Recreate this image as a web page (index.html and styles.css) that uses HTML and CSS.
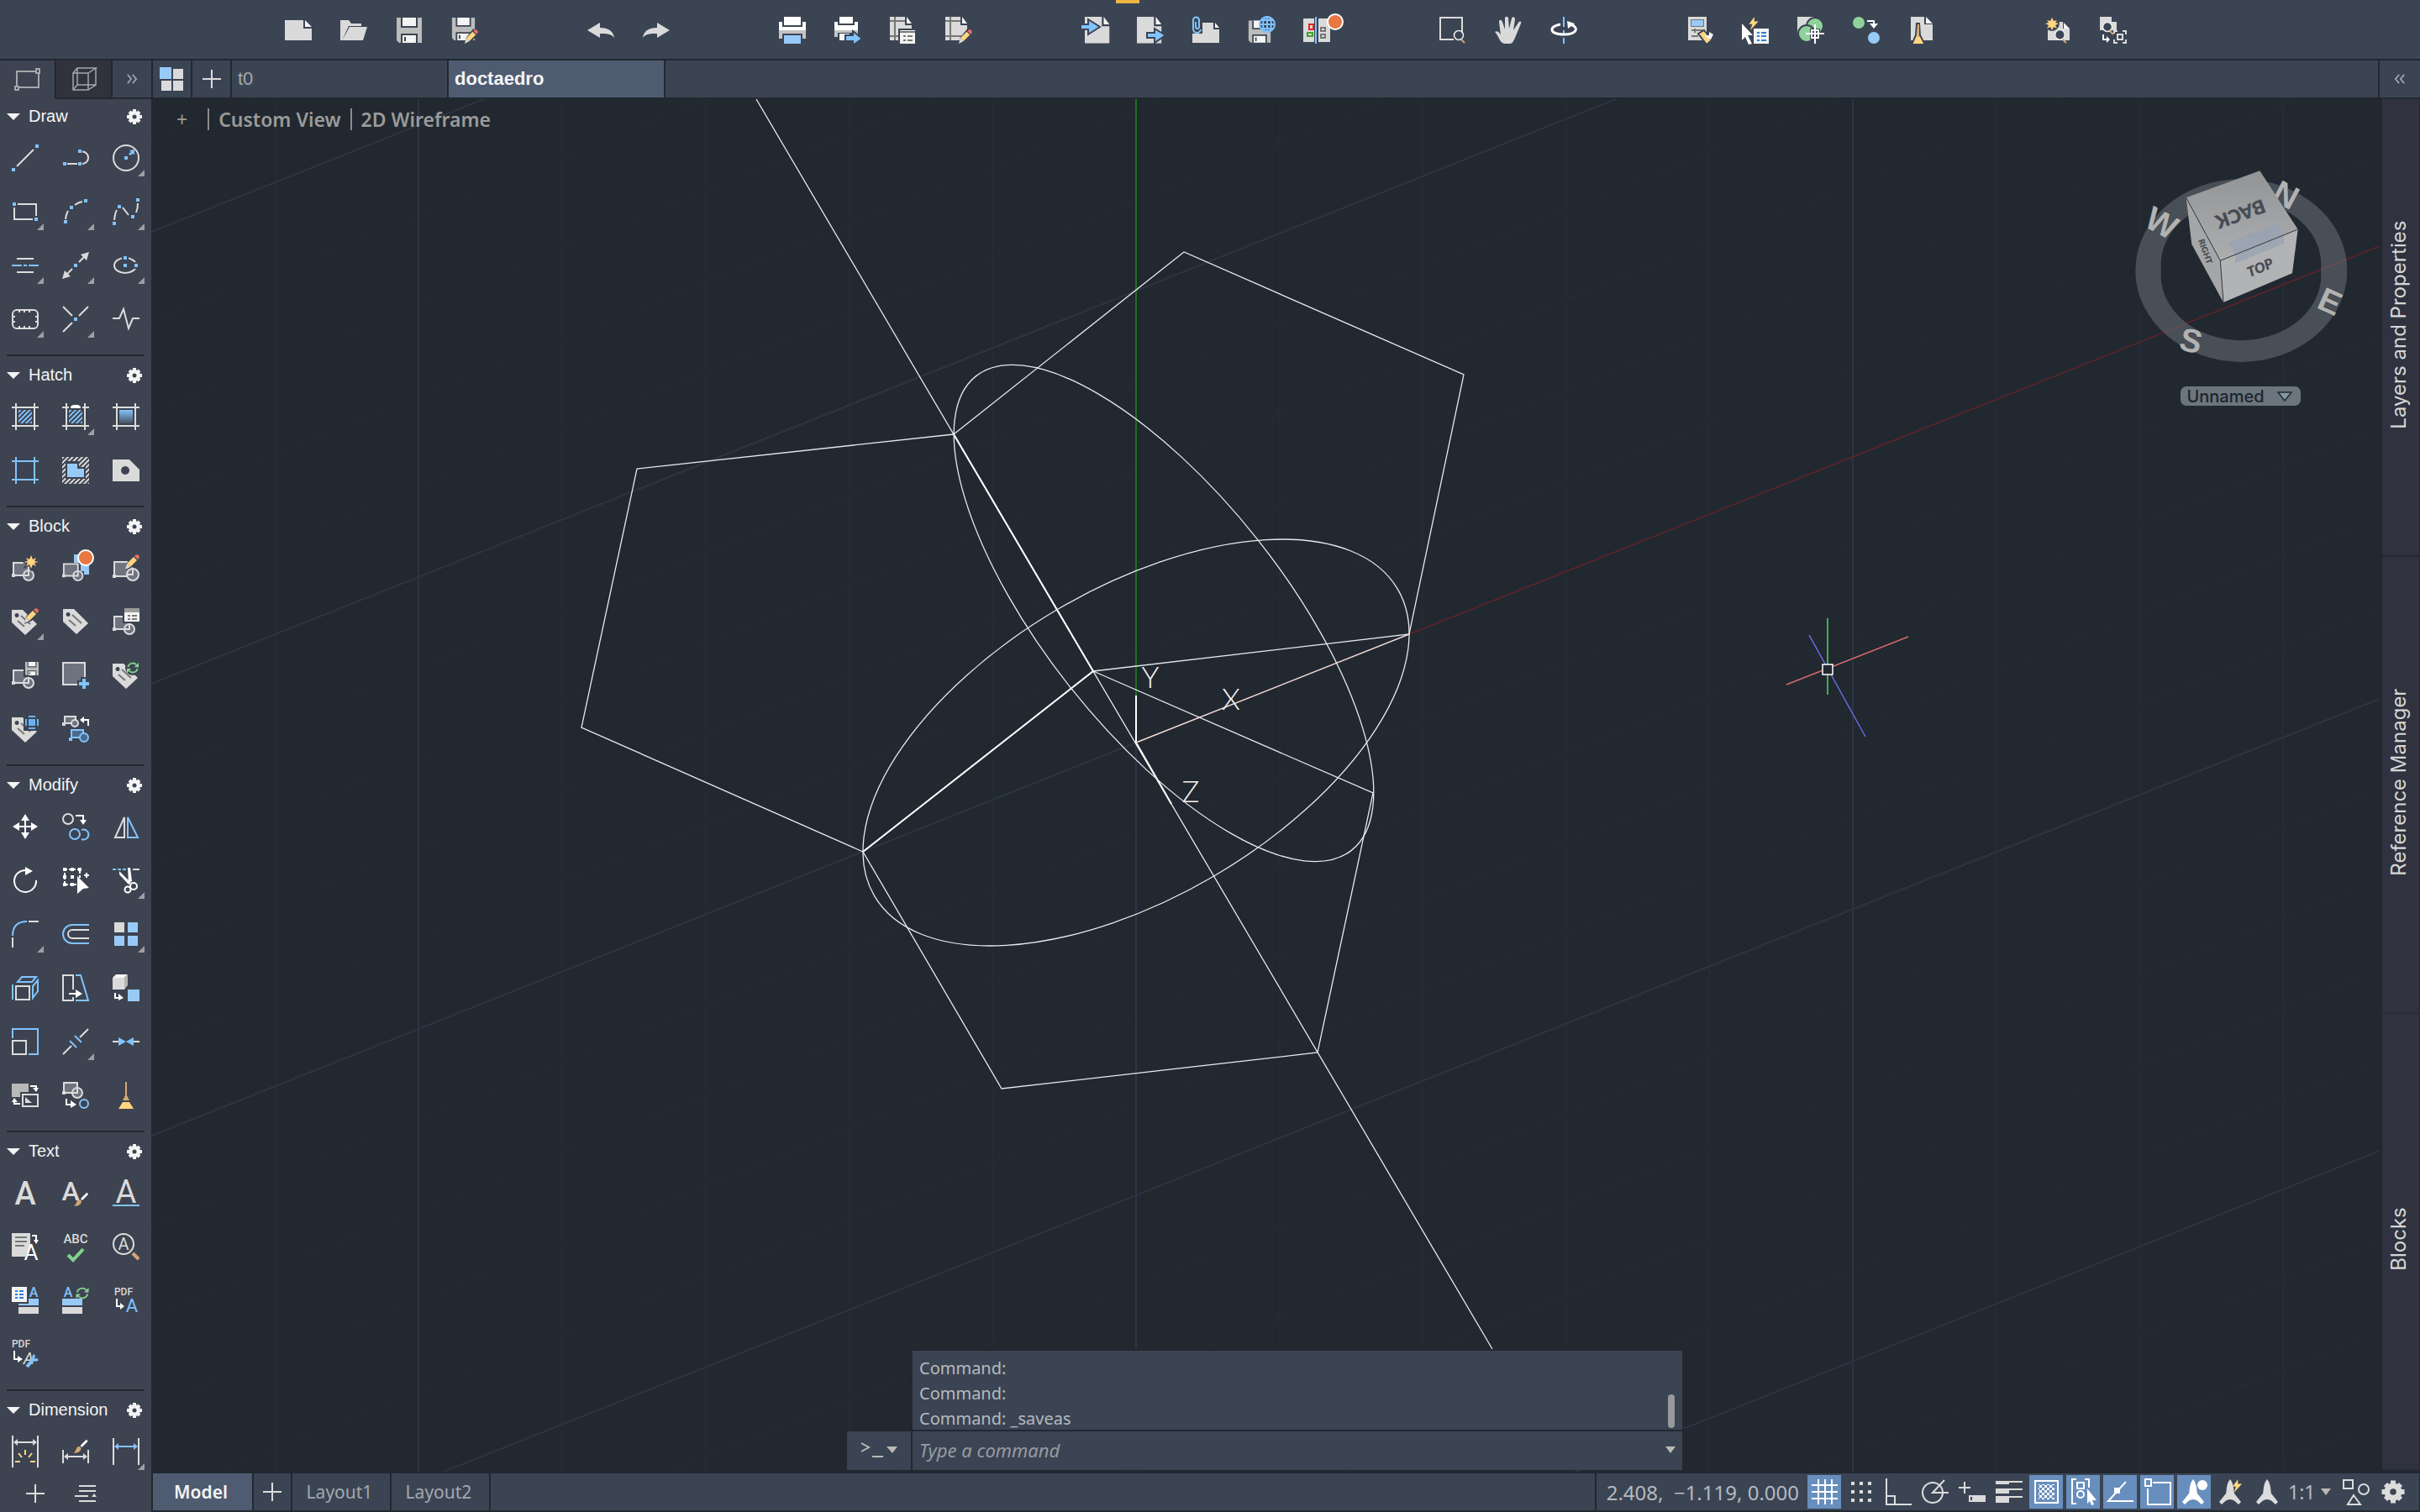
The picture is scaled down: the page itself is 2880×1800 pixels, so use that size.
FILE: index.html
```html
<!DOCTYPE html>
<html lang="en">
<head>
  <meta charset="UTF-8">
  <title>doctaedro</title>
  <link rel="stylesheet" href="styles.css">
</head>
<body>
  <!-- shared icon parts -->
  <svg class="defs" aria-hidden="true">
    <defs>
      <pattern id="hatch-blue" width="4" height="4" patternUnits="userSpaceOnUse" patternTransform="rotate(45)"><rect class="fb" width="2" height="4"/></pattern>
      <pattern id="hatch-grey" width="4" height="4" patternUnits="userSpaceOnUse" patternTransform="rotate(45)"><rect class="fg" width="2" height="4"/></pattern>
      <pattern id="checker" width="6" height="6" patternUnits="userSpaceOnUse"><path class="fw" d="M0 0h3v3H0zM3 3h3v3H3z"/></pattern>
      <linearGradient id="fade" x1="0" y1="0" x2="0" y2="1"><stop offset="0" stop-color="#82c3ff"/><stop offset="1" stop-color="#4a5260"/></linearGradient>
      <linearGradient id="face-back" x1="0" y1="0" x2="0" y2="1"><stop offset="0" stop-color="#939496"/><stop offset="1" stop-color="#adaeb0"/></linearGradient>
    </defs>
    <symbol id="gear" viewBox="0 0 20 20">
      <path fill="none" stroke="currentColor" stroke-width="4" d="M10 1v18M1 10h18M4 4l12 12M16 4L4 16"/>
      <circle cx="10" cy="10" r="4.5" fill="none" stroke="currentColor" stroke-width="5"/>
      <circle class="fk" cx="10" cy="10" r="2.5"/>
    </symbol>
    <symbol id="pencil" viewBox="0 0 17 17">
      <path class="fk" d="M0 19l2-9L11-1l7 7-9 9z"/>
      <path class="fo" d="M10 3l4 4-8 8-4-4z"/>
      <path class="fr" d="M11 2l1.500-1.500a3 3 0 0 1 4 4L15 6z"/>
      <path class="fg" d="M2 11l4 4-6 3z"/>
    </symbol>
    <symbol id="blk" viewBox="0 0 32 32">
      <path class="block" d="M2 25V10h18v15z"/>
      <circle class="block" cx="20" cy="25" r="6"/>
      <path class="g" d="M20 19v6h-6"/>
      <path class="fg" d="M0 23h4v4H0z"/>
    </symbol>
    <symbol id="tag" viewBox="0 0 32 32">
      <path class="fg" fill-rule="evenodd" d="M1 1h13l17 17-14 13L1 16zM7 5a2.500 2.500 0 1 0 .1 0z"/>
      <path class="d" d="M12 8l11 10M8 14l8 7"/>
    </symbol>
    <symbol id="refresh" viewBox="0 0 16 16">
      <path class="gn" d="M1.500 7A6.500 6 0 0 1 13 4M14.500 9A6.500 6 0 0 1 3 12"/>
      <path class="fgn" d="M16 1v6h-6zM0 15V9h6z"/>
    </symbol>
    <symbol id="brush" viewBox="0 0 20 20">
      <path d="M10 10l8-8" stroke="#fff" stroke-width="3"/>
      <path class="ft" d="M0 18c4-1 3-9 8-8l2 2c0 5-6 8-10 6z"/>
    </symbol>
    <symbol id="glass" viewBox="0 0 16 16">
      <circle cx="7" cy="6" r="5.500" fill="#3b4453" stroke="#eee" stroke-width="1.500"/>
      <path class="t" d="M10 11l4 4"/>
    </symbol>
    <symbol id="floppy" viewBox="0 0 32 32">
      <path fill="#bcbcbc" d="M1 1h30v30H4l-3-3z"/>
      <path class="fk" d="M6 1h20v12H6zM6 20h20v11H6z"/>
      <path class="fl" d="M8 1h16v10H8zM8 22h16v9H8z"/>
      <path class="fk" d="M10 24h2v5h-2z"/>
    </symbol>
    <symbol id="page" viewBox="0 0 32 32"><path class="fg" d="M0 0h18v10h8v18H0z"/><path class="fl" d="M20 0l6 8h-6z"/></symbol>
    <symbol id="annot" viewBox="0 0 40 40"><path d="M19 5c5 6 4 14 5 17l8 10-3 3c-4-4-6-6-10-6s-6 2-10 6l-3-3 8-10c1-3 0-11 5-17z" fill="currentColor"/></symbol>
    <symbol id="bolt" viewBox="0 0 16 20"><path class="fo" d="M9 0L1 11h5l-3 9L15 7H9z"/></symbol>
  </svg>

  <div class="app">
    <header class="toolbar">
      <span class="notch"></span>
      <div class="group">
        <button class="tool" aria-label="New"><svg viewBox="0 0 32 32"><path class="fg" d="M0 4h22v10h10v14H0z"/><path class="fl" d="M24 4l8 8h-8z"/></svg></button>
        <button class="tool" aria-label="Open"><svg viewBox="0 0 32 32"><path class="fg" d="M0 28V4h10l3 4h12v3H10L2 28zM11 12h21l-5 16H2z"/></svg></button>
        <button class="tool" aria-label="Save"><svg viewBox="0 0 32 32"><use href="#floppy"/></svg></button>
        <button class="tool" aria-label="Save as"><svg viewBox="0 0 32 32"><use href="#floppy" width="29" height="29"/><use href="#pencil" x="16" y="15" width="16" height="16"/></svg></button>
      </div>
      <div class="group">
        <button class="tool" aria-label="Undo"><svg viewBox="0 0 32 32"><path class="fg" d="M0 16L15 7v6c10 0 16 4 17 12-4-5-9-5-17-5v5z"/></svg></button>
        <button class="tool" aria-label="Redo"><svg viewBox="0 0 32 32"><path class="fg" d="M32 16L17 7v6C7 13 1 17 0 25c4-5 9-5 17-5v5z"/></svg></button>
      </div>
      <div class="group">
        <button class="tool" aria-label="Plot"><svg viewBox="0 0 32 32"><path class="fw" d="M0 6h4v6h24V6h4v10H0zM6 0h20v10H6z"/><path fill="#c4c4c4" d="M0 16h32v10H0z"/><path class="fk" d="M4 20h24v12H4z"/><path class="fbl" d="M6 22h20v10H6z"/></svg></button>
        <button class="tool" aria-label="Batch plot"><svg viewBox="0 0 32 32"><path class="fw" d="M0 6h4v4h20V6h4v10H0zM6 0h16v8H6z"/><path fill="#c4c4c4" d="M0 16h28v8H0z"/><path class="fk" d="M4 19h20v9H4z"/><path class="fl" d="M6 20h12v8H6z"/><path class="fb edge" d="M13 22h9v-5l11 9-11 8v-5h-9z"/></svg></button>
        <button class="tool" aria-label="Page setup"><svg viewBox="0 0 32 32"><use href="#page" width="32" height="32"/><path class="d" d="M6 0v28M0 5h18M0 23h16"/><path class="fk" d="M10 14h22v18H10z"/><path class="fl" d="M12 16h18v16H12z"/><path class="d" d="M12 18h18M16 23h3M16 28h3M21 23h6M21 28h6"/></svg></button>
        <button class="tool" aria-label="Plot styles"><svg viewBox="0 0 32 32"><use href="#page" width="32" height="32"/><path class="d" d="M6 0v28M0 5h18M0 23h20"/><use href="#pencil" x="16" y="15" width="16" height="16"/></svg></button>
      </div>
      <div class="group">
        <button class="tool" aria-label="Import"><svg viewBox="0 0 32 32"><use href="#page" x="4" width="36" height="36"/><path class="fb edge" d="M-1 9h9V3l14 9L8 21v-6h-9z"/></svg></button>
        <button class="tool" aria-label="Export"><svg viewBox="0 0 32 32"><use href="#page" width="36" height="36"/><path class="fb edge" d="M12 19h9v-5l13 8-13 9v-6h-9z"/></svg></button>
        <button class="tool" aria-label="Attach"><svg viewBox="0 0 32 32"><path class="fg" d="M0 18l12-11h13v8h7v16H0z"/><path class="fl" d="M27 7l5 6h-5z"/><path class="fk" d="M0 0h12v20H0z"/><path class="b" d="M4 6v6a2 2 0 0 0 4 0V4a3 3 0 0 0-7 0v10a4 4 0 0 0 9 1"/></svg></button>
        <button class="tool" aria-label="Save to web"><svg viewBox="0 0 32 32"><use href="#floppy" y="3" width="28" height="29"/><circle cx="23" cy="9" r="9" fill="#3b4453" stroke="#82c3ff" stroke-width="2"/><path class="b" d="M14 9h18M16 4h14M16 14h14M23 0v18"/><ellipse class="b" cx="23" cy="9" rx="5" ry="9"/></svg></button>
        <button class="tool" aria-label="Compare"><svg viewBox="0 0 32 32"><path class="fg" d="M0 2h13v28H0zM18 2h14v28H18z"/><path class="b" d="M15 0v32"/><path fill="none" stroke="#f02020" stroke-width="2" d="M7 9h5v6H7z"/><path fill="none" stroke="#3da52e" stroke-width="2" d="M5 19h6v4H5z"/><path class="d" d="M21 13h5v4h-5zM21 21h5v4h-5z"/><circle cx="38" cy="6" r="9" class="badge"/></svg></button>
      </div>
      <div class="group">
        <button class="tool" aria-label="Zoom window"><svg viewBox="0 0 32 32"><path class="g" d="M27 18V1H1v26h16"/><use href="#glass" x="16" y="16" width="16" height="16"/></svg></button>
        <button class="tool" aria-label="Pan"><svg viewBox="0 0 32 32"><path class="fg" d="M0 18c3-2 6 1 7 4L5 6c0-3 3-3 4 0l3 9V2c0-3 4-3 4 0l1 12 3-12c1-3 4-2 4 1l-2 13 6-9c2-3 4-1 3 1l-7 17c-2 4-3 7-6 7h-6c-6 0-7-9-12-14z"/></svg></button>
        <button class="tool" aria-label="Orbit"><svg viewBox="0 0 32 32"><path class="b" d="M16 0v12M16 16v4M16 25v7"/><path d="M12 9C-2 11-2 21 16 21c17 0 18-9 8-12" fill="none" stroke="#fff" stroke-width="3"/><path class="fw" d="M20 5l9 3-8 6z"/></svg></button>
      </div>
      <div class="group">
        <button class="tool" aria-label="Calculator"><svg viewBox="0 0 32 32"><path class="fg" d="M2 0h22v28H2z"/><path fill="#6f7380" d="M5 3h16v9H5z"/><path class="fbl" d="M6 4h14v7H6z"/><path class="d" d="M6 16h14M10 14v5M6 23h8"/><path class="edge fo" d="M14 20l7-4 9 12-6 5z"/><path class="fl" d="M21 18l3 4h3v-4l5 3-3 6-4-1z"/></svg></button>
        <button class="tool" aria-label="Quick select"><svg viewBox="0 0 32 32"><use href="#bolt" x="6" y="0" width="16" height="16"/><path class="fl" d="M14 14h18v18H14z"/><path d="M18 19h3M18 23h3M18 28h3M23 19h6M23 23h6M23 28h6" stroke="#2f7fd6" stroke-width="2"/><path class="fw" d="M0 8l13 14H7l5 10-4 1-4-9-4 4z"/></svg></button>
        <button class="tool" aria-label="Geolocation"><svg viewBox="0 0 32 32"><path class="fg" d="M0 0h20v20H0z"/><circle class="fgn edge" cx="21" cy="11" r="10"/><circle class="fgn edge" cx="11" cy="20" r="10"/><path class="fk" d="M15 14h12v13H15z"/><path d="M10 20h22M21 9v23" stroke="#fff" stroke-width="2"/><path fill="none" stroke="#fff" stroke-width="2" d="M17 16h8v9h-8z"/></svg></button>
        <button class="tool" aria-label="Match properties"><svg viewBox="0 0 32 32"><circle class="fgn" cx="7" cy="7" r="7"/><circle class="fbl" cx="25" cy="25" r="7"/><path class="w" d="M17 5h8v5"/><path class="fw" d="M20 8h10l-5 6z"/></svg></button>
        <button class="tool" aria-label="Purge"><svg viewBox="0 0 32 32"><path class="fg" d="M3 0h16v9h10v19H3z"/><path class="fl" d="M21 0l8 8h-8z"/><path class="edge fo" d="M10 8h3l1 14 6 11H4l5-11z"/><path class="t" d="M12 9v15"/></svg></button>
      </div>
      <div class="group">
        <button class="tool" aria-label="New view"><svg viewBox="0 0 32 32"><path class="fg" d="M4 14h8V6h10v8h8v14H4z"/><path class="fl" d="M23 7l7 7h-7z"/><circle class="fk" cx="9" cy="8" r="9"/><path class="fo" d="M9 1l2 4 4-1-2 3 4 1-4 2 2 4-4-2-2 4-2-4-4 2 2-4-4-2 4-1-2-3 4 1z"/><use href="#glass" x="11" y="15" width="17" height="17"/></svg></button>
        <button class="tool" aria-label="View manager"><svg viewBox="0 0 32 32"><path class="fg" d="M0 0h14v6h6v10H0z"/><use href="#glass" x="2" y="6" width="16" height="16"/><path class="w" d="M4 21v6h5"/><path class="fw" d="M8 23l4 4-4 4z"/><path class="g" d="M17 20v-3h4M27 17h4v4M31 27v4h-4M21 31h-4v-4"/><path class="g" d="M21 21h6v6h-6z"/></svg></button>
      </div>
    </header>

    <nav class="tabs">
      <button class="set set-on" aria-label="Drafting tools"><svg viewBox="0 0 32 32"><path d="M3 25V6h22M29 7v18H6" fill="none" stroke="#a5a7ab" stroke-width="2"/><path d="M1 24h4v4H1zM26 3h4v5h-4z" fill="none" stroke="#a5a7ab" stroke-width="2"/></svg></button>
      <button class="set" aria-label="Modeling tools"><svg viewBox="0 0 32 32"><path d="M3 9h18v20H3zM3 9l5-6h22l-9 6M30 3v20l-9 6M8 3v20l-5 6M8 23h22" fill="none" stroke="#a5a7ab" stroke-width="1.500"/></svg></button>
      <button class="more" aria-label="More tool sets"><svg viewBox="0 0 16 14"><path d="M2 1l5 6-5 6M9 1l5 6-5 6"/></svg></button>
      <button class="square" aria-label="Drawing tabs"><svg viewBox="0 0 30 30"><path class="fg" d="M16 3h12v12H16zM2 17h12v12H2zM16 17h12v12H16z"/><path class="fbl" d="M0 1h14v14H0z"/></svg></button>
      <button class="square" aria-label="New tab"><svg viewBox="0 0 30 30"><path class="g" d="M15 4v22M4 15h22"/></svg></button>
      <button class="tab">t0</button>
      <button class="tab active">doctaedro</button>
      <span class="fill"></span>
      <button class="more" aria-label="Collapse panel"><svg viewBox="0 0 16 14"><path d="M7 1L2 7l5 6M14 1L9 7l5 6"/></svg></button>
    </nav>

    <div class="work">
      <aside class="sidebar">
        <div class="sections">
          <section>
            <h2><span class="arrow"></span>Draw<button aria-label="Draw settings"><svg><use href="#gear"/></svg></button></h2>
            <div class="tools">
              <button aria-label="Line"><svg viewBox="0 0 32 32"><path class="g" d="M6 26L26 6"/><path class="fb" d="M28 0h4v4h-4zM0 28h4v4H0z"/></svg></button>
              <button aria-label="Polyline"><svg viewBox="0 0 32 32"><path class="g" d="M6 23h12M24 8.500a7 7.200 0 0 1 0 14.500"/><path class="fb" d="M1 21h4v4H1zM19 21h4v4h-4zM19 6h4v4h-4z"/></svg></button>
              <button class="fly" aria-label="Circle"><svg viewBox="0 0 32 32"><circle class="g" cx="16" cy="16" r="15"/><path class="fb" d="M14 14h4v4h-4zM26 6v6l-2-1-3 2-2-2 3-2-2-2z"/></svg></button>
              <button class="fly" aria-label="Rectangle"><svg viewBox="0 0 32 32"><path class="g" d="M7 7h22v14M25 25H3V11"/><path class="fb" d="M1 5h4v4H1zM27 23h4v4h-4z"/></svg></button>
              <button class="fly" aria-label="Arc"><svg viewBox="0 0 32 32"><path class="g" d="M4 25q1-7 3-10M15 8q4-3 9-4"/><path class="fb" d="M26 1h4v4h-4zM9 9h4v4H9zM2 26h4v4H2z"/></svg></button>
              <button class="fly" aria-label="Spline"><svg viewBox="0 0 32 32"><path class="g" d="M2 26q1-9 3-12M12 11l7 9M28 17q2-5 2-11"/><path class="fb" d="M28 0h4v4h-4zM6 8h4v4H6zM22 20h4v4h-4zM0 28h4v4H0z"/></svg></button>
              <button class="fly" aria-label="Construction line"><svg viewBox="0 0 32 32"><path class="g" d="M6 8h20M6 24h20"/><path class="b" d="M0 16h12M14 16h4M20 16h12"/></svg></button>
              <button class="fly" aria-label="Ray"><svg viewBox="0 0 32 32"><path class="g" d="M20 12l6-6M12 20l-6 6"/><path class="fg" d="M32 0L22 3l7 7zM0 32l3-10 7 7z"/><path class="fb" d="M14 14h4v4h-4z"/></svg></button>
              <button class="fly" aria-label="Ellipse"><svg viewBox="0 0 32 32"><ellipse class="g" cx="15" cy="16" rx="13" ry="9"/><path class="fk" d="M11 4h8v6h-8zM25 12h6v8h-6z"/><path class="fb" d="M13 5h4v4h-4zM13 14h4v4h-4zM26 14h4v4h-4z"/></svg></button>
              <button class="fly" aria-label="Revision cloud"><svg viewBox="0 0 32 32"><rect class="g" x="1" y="5" width="30" height="22" rx="5"/><path class="g scallop" d="M8 7h17M8 25h17M3 12v9M29 12v9"/></svg></button>
              <button class="fly" aria-label="Point"><svg viewBox="0 0 32 32"><path class="g" d="M1 1l11 11M20 12L31 1M12 20L1 31"/><path class="fb" d="M14 14h4v4h-4z"/></svg></button>
              <button aria-label="Break line"><svg viewBox="0 0 32 32"><path class="g" d="M0 15h8l5-11 6 23 5-12h8"/></svg></button>
            </div>
          </section>
          <section>
            <h2><span class="arrow"></span>Hatch<button aria-label="Hatch settings"><svg><use href="#gear"/></svg></button></h2>
            <div class="tools">
              <button aria-label="Hatch"><svg viewBox="0 0 32 32"><path class="g" d="M5 0v32M27 0v32M0 5h32M0 27h32"/><path fill="url(#hatch-blue)" d="M8 8h16v16H8z"/></svg></button>
              <button class="fly" aria-label="Edit hatch"><svg viewBox="0 0 32 32"><path class="g" d="M5 0v32M27 0v32M0 5h8M24 5h8M0 27h32"/><path fill="url(#hatch-blue)" d="M8 8h16v16H8z"/><path class="fw" d="M10 6V4l3-2h6l3 2v2z"/></svg></button>
              <button aria-label="Gradient"><svg viewBox="0 0 32 32"><path class="g" d="M5 0v32M27 0v32M0 5h32M0 27h32"/><path fill="url(#fade)" d="M8 8h16v16H8z"/></svg></button>
              <button aria-label="Boundary"><svg viewBox="0 0 32 32"><path class="b" d="M5 0v32M27 0v32M0 5h32M0 27h32"/></svg></button>
              <button aria-label="Region"><svg viewBox="0 0 32 32"><path fill="url(#hatch-grey)" d="M0 0h32v32H0z"/><path class="fk" d="M4 5h16v7h8v14H4z"/><path class="fbl" d="M6 8h12v6h8v10H6z"/></svg></button>
              <button aria-label="Wipeout"><svg viewBox="0 0 32 32"><path class="fg" fill-rule="evenodd" d="M0 3h20l12 12v14H0zM15 11a5 5 0 1 0 .1 0z"/></svg></button>
            </div>
          </section>
          <section>
            <h2><span class="arrow"></span>Block<button aria-label="Block settings"><svg><use href="#gear"/></svg></button></h2>
            <div class="tools">
              <button aria-label="Create block"><svg viewBox="0 0 32 32"><use href="#blk"/><path class="fo halo" d="M23 1l2 5 4-2-2 4 5 1-5 1 2 4-4-2-2 5-2-5-4 2 2-4-5-1 5-1-2-4 4 2z"/></svg></button>
              <button aria-label="Insert block"><svg viewBox="0 0 32 32"><path class="fbl" d="M14 0h12v12h6v12H22V12h-8z"/><path class="fk" d="M0 10h21v10h5v12H0z"/><use href="#blk" y="2" width="30" height="30"/><circle class="badge" cx="28" cy="4" r="9"/></svg></button>
              <button aria-label="Edit block"><svg viewBox="0 0 32 32"><path class="block" d="M2 26V9h21v17z"/><circle class="block" cx="24" cy="24" r="7"/><path class="g" d="M24 17v7h-7"/><path class="fg" d="M0 24h4v4H0z"/><use href="#pencil" x="15" width="17" height="17"/></svg></button>
              <button class="fly" aria-label="Edit attributes"><svg viewBox="0 0 32 32"><use href="#tag" y="1" x="-1"/><use href="#pencil" x="15" width="17" height="17"/></svg></button>
              <button aria-label="Define attributes"><svg viewBox="0 0 32 32"><use href="#tag"/></svg></button>
              <button aria-label="Block properties"><svg viewBox="0 0 32 32"><use href="#blk"/><path class="fk" d="M12-2h22v20H12z"/><path fill="#9a9a9a" d="M14 0h18v5H14z"/><path class="fl" d="M14 5h18v11H14z"/><path class="d" d="M18 9h3M18 13h3M23 9h6M23 13h6"/></svg></button>
              <button aria-label="Write block"><svg viewBox="0 0 32 32"><use href="#blk"/><path class="fk" d="M14-2h20v20H14z"/><use href="#floppy" x="15.500" y="-.500" width="17" height="17"/></svg></button>
              <button aria-label="Base point"><svg viewBox="0 0 32 32"><path class="block" d="M1 1h26v26H1z"/><path class="fk" d="M18 22h4v-4h10v14H18z"/><path class="fb" d="M24 20h4v4h4v4h-4v4h-4v-4h-4v-4h4z"/></svg></button>
              <button aria-label="Sync attributes"><svg viewBox="0 0 32 32"><use href="#tag" y="1" x="-1"/><circle class="fk" cx="24" cy="7" r="9"/><use href="#refresh" x="16" width="16" height="14"/></svg></button>
              <button aria-label="Attribute manager"><svg viewBox="0 0 32 32"><use href="#tag" y="1" x="-1"/><path class="fk" d="M14-2h20v20H14z"/><path fill="#6cb0ee" d="M20 4h8v8h-8zM20 0h8v2h-8zM20 14h8v2h-8zM16 4h2v8h-2zM30 4h2v8h-2z"/></svg></button>
              <button aria-label="Replace block"><svg viewBox="0 0 32 32"><path class="block" d="M3 1h13v8H3z"/><circle class="block" cx="15" cy="9" r="4"/><path class="fg" d="M0 8h4v4H0z"/><g fill="#4d6b8c" stroke="#82c3ff" stroke-width="2"><path d="M11 17h14v9H11z"/><circle cx="26" cy="26" r="5"/></g><path class="fb" d="M8 26h4v4H8z"/><path class="w" d="M25 5h6v7"/><path class="fw" d="M21 5l5-4v8z"/></svg></button>
            </div>
          </section>
          <section>
            <h2><span class="arrow"></span>Modify<button aria-label="Modify settings"><svg><use href="#gear"/></svg></button></h2>
            <div class="tools">
              <button aria-label="Move"><svg viewBox="0 0 32 32"><path class="w" d="M16 6v20M6 16h20"/><path class="fw" d="M16 1l5 8H11zM16 31l5-8H11zM1 16l8-5v10zM31 16l-8-5v10z"/></svg></button>
              <button aria-label="Copy"><svg viewBox="0 0 32 32"><circle class="g" cx="7" cy="7" r="6"/><path class="b" d="M23 20a6 6 0 1 1 0 11"/><circle class="b" cx="15" cy="25" r="6"/><path class="w" d="M16 3h9v7"/><path class="fw" d="M21 8h8l-4 6z"/></svg></button>
              <button aria-label="Mirror"><svg viewBox="0 0 32 32"><path class="g" d="M14 5v24H3z"/><path class="b" d="M18 5v24h12z"/></svg></button>
              <button aria-label="Rotate"><svg viewBox="0 0 32 32"><path class="w" d="M17 4a13 13 0 1 0 12 12"/><path class="fw" d="M16 0l9 5-9 5z"/></svg></button>
              <button aria-label="Select"><svg viewBox="0 0 32 32"><path class="w dash" d="M3 3h18v18H3z"/><path class="fw" d="M1 1h4v4H1zM10 1h4v4h-4zM19 1h4v4h-4zM1 10h4v4H1zM10 10h4v4h-4zM1 19h4v4H1zM10 19h4v4h-4zM18 11l14 14-7 1-7 6zM28 7h2v2h2v2h-2v2h-2v-2h-2V9h2z"/></svg></button>
              <button class="fly" aria-label="Trim"><svg viewBox="0 0 32 32"><path class="b" stroke-dasharray="4 2" d="M0 3h16"/><path class="g" d="M24 3h8"/><path class="fw" d="M18 1h3l2 16-4 2zM8 5l14 14-3 2L8 9z"/><circle class="w" cx="25" cy="23" r="4"/><circle class="w" cx="18" cy="27" r="3.500"/></svg></button>
              <button class="fly" aria-label="Fillet"><svg viewBox="0 0 32 32"><path class="b" d="M1 18Q1 1 18 1"/><path class="g" d="M20 1h12M1 20v12"/></svg></button>
              <button aria-label="Offset"><svg viewBox="0 0 32 32"><path class="b" d="M32 5H12a11 11 0 0 0 0 22h20"/><path class="g" d="M32 11H12a5 5 0 0 0 0 10h20"/></svg></button>
              <button class="fly" aria-label="Array"><svg viewBox="0 0 32 32"><path class="fg" d="M2 2h12v12H2z"/><path class="fbl" d="M18 2h12v12H18zM2 18h12v12H2zM18 18h12v12H18z"/></svg></button>
              <button aria-label="Extrude"><svg viewBox="0 0 32 32"><path class="g" d="M5 14h16v16H5z"/><path class="b" d="M1 12v18M7 9l5-6h17l-5 6zM25 14l6-7v13l-6 8z"/></svg></button>
              <button aria-label="Stretch"><svg viewBox="0 0 32 32"><path class="g" d="M13 18V1H1v30h12v-4"/><path class="b" d="M16 1h6l9 30H16"/><path class="w" d="M8 23h10"/><path class="fw" d="M16 18l8 5-8 5z"/></svg></button>
              <button aria-label="Flatten"><svg viewBox="0 0 32 32"><path class="fg" d="M0 4h14v14H0z"/><path class="fl" d="M0 4l4-4h14l-4 4z"/><path fill="#b5b5b5" d="M14 4l4-4v13l-4 5z"/><path class="fbl" d="M18 18h14v14H18z"/><path class="w" d="M3 22v6h5"/><path class="fw" d="M7 23l6 5-6 3z"/></svg></button>
              <button aria-label="Scale"><svg viewBox="0 0 32 32"><path class="g" d="M1 15h16v16H1z"/><path class="b" d="M1 12V1h30v30H20"/></svg></button>
              <button class="fly" aria-label="Break"><svg viewBox="0 0 32 32"><path class="g" d="M1 31l10-10M21 11L31 1"/><path class="b" d="M9 15l8 8M15 9l8 8"/></svg></button>
              <button aria-label="Join"><svg viewBox="0 0 32 32"><path class="g" d="M0 16h8M24 16h8"/><path class="fb" d="M7 11l9 5-9 5zM25 11l-9 5 9 5z"/></svg></button>
              <button aria-label="Change space"><svg viewBox="0 0 32 32"><path fill="#b9b9b9" d="M0 2h20v10H10v6H0z"/><path class="g" d="M13 15h18v14H13z"/><path class="fg" d="M16 18l8 7h-8z"/><path class="w" d="M22 5h7v3M10 26H3v-3"/><path class="fw" d="M25 7h7l-3 5zM0 24h7l-4-5z"/></svg></button>
              <button aria-label="Convert"><svg viewBox="0 0 32 32"><path class="block" d="M2 1h16v12H2z"/><circle class="block" cx="18" cy="13" r="6"/><path class="g" d="M18 7v6h-6"/><path class="fg" d="M0 11h4v4H0z"/><circle class="b" cx="26" cy="26" r="5"/><path class="w" d="M5 20v7h6"/><path class="fw" d="M10 22l7 5-7 4z"/></svg></button>
              <button aria-label="Clean up"><svg viewBox="0 0 32 32"><path class="t" d="M16 0v18"/><path class="ft" d="M15 16h2l3 6h-8z"/><path class="fo" d="M12 24h8l5 8H7z"/></svg></button>
            </div>
          </section>
          <section>
            <h2><span class="arrow"></span>Text<button aria-label="Text settings"><svg><use href="#gear"/></svg></button></h2>
            <div class="tools">
              <button aria-label="Multiline text"><svg viewBox="0 0 32 32"><text class="fg letter" x="16" y="30" font-size="38">A</text></svg></button>
              <button aria-label="Text style"><svg viewBox="0 0 32 32"><text class="fg letter" x="10" y="25" font-size="32">A</text><use href="#brush" x="14" y="15" width="18" height="18"/></svg></button>
              <button aria-label="Single line text"><svg viewBox="0 0 32 32"><text class="fg letter light" x="16" y="28" font-size="38">A</text><path class="b" d="M0 31h32"/></svg></button>
              <button aria-label="Fields to text"><svg viewBox="0 0 32 32"><path class="fg" d="M0 0h22v16l-6 12H0z"/><path class="d" d="M4 5h14M4 10h14M4 15h11"/><text class="fw letter light" x="23" y="32" font-size="26">A</text><path class="w" d="M24 3h5v6"/><path class="fw" d="M26 8h6l-3 5z"/></svg></button>
              <button aria-label="Spell check"><svg viewBox="0 0 32 32"><text class="fg letter" x="16" y="12" font-size="15">ABC</text><path d="M7 26l6 6L25 19" fill="none" stroke="#82d18c" stroke-width="4"/></svg></button>
              <button aria-label="Find text"><svg viewBox="0 0 32 32"><circle class="g" cx="13" cy="13" r="12"/><text class="fg letter light" x="13" y="20" font-size="20">A</text><path d="M24 24l7 7" stroke="#d3a874" stroke-width="4"/></svg></button>
              <button aria-label="Text layers"><svg viewBox="0 0 32 32"><path class="fbl" d="M8 14h24v8H8z"/><path class="fg" d="M8 24h24v8H8z"/><path class="fk" d="M0 0h20v20H0z"/><path class="fl" d="M0 0h18v18H0z"/><path d="M4 5h3M4 9h3M4 13h3M9 5h5M9 9h5M9 13h5" stroke="#2f7fd6" stroke-width="2"/><text class="fb letter" x="26" y="12" font-size="16">A</text></svg></button>
              <button aria-label="Update text"><svg viewBox="0 0 32 32"><path class="fbl" d="M0 14h24v8H0z"/><path class="fg" d="M0 24h24v8H0z"/><text class="fb letter" x="7" y="12" font-size="16">A</text><use href="#refresh" x="16" y="0" width="16" height="15"/></svg></button>
              <button aria-label="PDF to text"><svg viewBox="0 0 32 32"><text class="fg letter" x="13" y="10" font-size="12">PDF</text><text class="fb letter light" x="23" y="30" font-size="22">A</text><path class="w" d="M5 14v9h5"/><path class="fw" d="M9 19l5 4-5 4z"/></svg></button>
              <button aria-label="PDF recognition"><svg viewBox="0 0 32 32"><text class="fg letter" x="11" y="8" font-size="12">PDF</text><text class="fg letter light" x="20" y="28" font-size="20" font-style="italic">A</text><path class="w" d="M3 12v10h5"/><path class="fw" d="M7 18l6 4-6 4z"/><path d="M18 31l8-9" stroke="#82c3ff" stroke-width="4"/><path d="M31 22c-4 3-7-1-4-5" fill="none" stroke="#82c3ff" stroke-width="3"/></svg></button>
            </div>
          </section>
          <section>
            <h2><span class="arrow"></span>Dimension<button aria-label="Dimension settings"><svg><use href="#gear"/></svg></button></h2>
            <div class="tools">
              <button aria-label="Quick dimension"><svg viewBox="0 0 32 32"><path class="g" d="M1-3v38M31-3v38M4 5h24"/><path class="fg" d="M2 5l5-4v8zM30 5l-5-4v8z"/><path d="M16 14v6M8 18l4 5M24 18l-4 5M4 28h6M22 28h6" stroke="#ffd580" stroke-width="2"/></svg></button>
              <button aria-label="Dimension style"><svg viewBox="0 0 32 32"><path class="g" d="M1 14v16M31 14v16M4 22h24"/><path class="fg" d="M2 22l5-4v8zM30 22l-5-4v8z"/><use href="#brush" x="13" y="1" width="19" height="18"/></svg></button>
              <button class="fly" aria-label="Linear dimension"><svg viewBox="0 0 32 32"><path class="g" d="M1 0v32M31 0v32"/><path class="b" d="M4 10h24"/><path class="fb" d="M2 10l5-4v8zM30 10l-5-4v8z"/></svg></button>
            </div>
          </section>
        </div>
        <footer>
          <button aria-label="Add section"><svg viewBox="0 0 28 28"><path class="g" d="M14 3v22M3 14h22"/></svg></button>
          <button aria-label="Section list"><svg viewBox="0 0 28 28"><path class="g" d="M6 5h20M6 11h20M1 17h16M6 23h20"/><path class="fg" d="M24 14l3 4h-6z"/></svg></button>
        </footer>
      </aside>

      <div class="right">
        <div class="stage">
          <main class="canvas">
            <svg class="drawing" viewBox="180 118 2652 1634" preserveAspectRatio="xMidYMid slice">
              <path class="minor" d="M328 118v1634M669 118v1634M840 118v1634M1011 118v1634M1181 118v1634M1523 118v1634M1693 118v1634M1864 118v1634M2034 118v1634M2376 118v1634M2546 118v1634M2717 118v1634
                M180 168l2652-1059M180 383l2652-1059M180 491l2652-1059M180 599l2652-1059M180 706l2652-1059M180 922l2652-1059M180 1029l2652-1059M180 1137l2652-1059M180 1245l2652-1059M180 1460l2652-1059M180 1568l2652-1059M180 1675l2652-1059M180 1783l2652-1059M180 1998l2652-1059M180 2106l2652-1059M180 2214l2652-1059M180 2321l2652-1059M180 2536l2652-1059M180 2644l2652-1059M180 2752l2652-1059"/>
              <path class="major" d="M498 118v1634M2205 118v1634M1352 884v868M180 276l2652-1059M180 814l2652-1059M180 1352l1172-468M180 1891l2652-1059M180 2429l2652-1059"/>
              <path class="axis-y" d="M1352 118v710"/>
              <path class="axis-x" d="M1677 755L2832 293"/>
              <path class="shape" d="M900 118L1776 1606M1135 517L1409 300 1742 446 1677 755 1301 799M1135 517L758 558 692 866 1027 1014 1301 799M1301 799L1634 944 1568 1253 1192 1296 1027 1014"/>
              <path class="shape strong" d="M1135 517L1301 799 1027 1014M1352 828v56l42 73"/>
              <path class="shape pink" d="M1352 884L1677 755"/>
              <ellipse class="shape" cx="1352" cy="884" rx="361" ry="184" transform="rotate(-30.400 1352 884)"/>
              <ellipse class="shape" cx="1385" cy="730" rx="360" ry="142" transform="rotate(51.600 1385 730)"/>
              <text class="ucs" x="1369" y="819">Y</text>
              <text class="ucs" x="1465" y="845">X</text>
              <text class="ucs" x="1417" y="955">Z</text>
              <g fill="none" stroke-width="1.500">
                <path stroke="#6a6ae0" d="M2153 756l67 121"/>
                <path stroke="#d86a6e" d="M2126 815l145-57"/>
                <path stroke="#52d860" d="M2175 736v91"/>
                <path class="pickbox" stroke="#fff" d="M2169 791h12v12h-12z"/>
              </g>
            </svg>

            <div class="view-menu">
              <button>+</button><button>Custom View</button><button>2D Wireframe</button>
            </div>

            <div class="viewcube">
              <svg viewBox="0 0 840 720">
                <path fill="#7b7f85" fill-opacity=".45" fill-rule="evenodd" d="M4 372a376 325 0 1 0 756 0 376 325 0 1 0-756 0zM96 370a286 232 0 1 0 570 0 286 232 0 1 0-570 0z"/>
                <g class="compass">
                  <text x="97" y="243" transform="rotate(28 97 205)">W</text>
                  <text x="540" y="143" transform="rotate(28 540 105)">N</text>
                  <text x="698" y="523" transform="rotate(24 698 485)">E</text>
                  <text x="202" y="663" transform="rotate(14 202 625)">S</text>
                </g>
                <path fill="url(#face-back)" d="M185 112L448 16 584 225 307 337z"/>
                <path fill="#a5a6a8" d="M185 112l122 225 11 149-113-208z"/>
                <path fill="#b2b3b5" d="M307 337l277-112-20 157-246 104z"/>
                <path fill="#98a3b3" fill-opacity=".8" d="M336 272l174-68 24 36v36l-174 70v-32z"/>
                <path fill="none" stroke="#333a40" stroke-width="3" d="M185 112l122 225 277-112M307 337l11 149"/>
                <text class="face" x="378" y="190" transform="rotate(160 378 168)">BACK</text>
                <text class="face small" x="448" y="380" transform="rotate(-23 448 360)">TOP</text>
                <text class="face tiny" x="250" y="312" transform="rotate(70 250 305)">RIGHT</text>
              </svg>
              <label class="ucs-pick">
                <select aria-label="Coordinate system"><option>Unnamed</option></select>
                <svg viewBox="0 0 20 12"><path d="M2 1h16l-8 10z" fill="#7f99a0" stroke="#232a34" stroke-width="1.500"/></svg>
              </label>
            </div>

            <div class="command">
              <div class="history">
                <p>Command:</p>
                <p>Command:</p>
                <p>Command: _saveas</p>
                <span class="thumb"></span>
              </div>
              <button class="prompt" aria-label="Recent commands"><svg viewBox="0 0 44 20"><path d="M1 2l9 5-9 5M14 18h13" fill="none" stroke="#b9b9b5" stroke-width="2"/><path d="M31 6h13l-6 8z" fill="#b9b9b5"/></svg></button>
              <div class="entry">
                <input type="text" placeholder="Type a command" aria-label="Command">
                <span class="arrow"></span>
              </div>
            </div>
          </main>
          <aside class="palettes">
            <button>Layers and Properties</button>
            <button>Reference Manager</button>
            <button>Blocks</button>
          </aside>
        </div>

        <footer class="status">
          <button class="layout active">Model</button>
          <button class="square" aria-label="New layout"><svg viewBox="0 0 30 30"><path class="g" d="M15 4v22M4 15h22"/></svg></button>
          <button class="layout">Layout1</button>
          <button class="layout">Layout2</button>
          <span class="fill"></span>
          <div class="modes">
            <span class="coords">2.408,&nbsp; −1.119, 0.000</span>
            <button class="on" aria-label="Grid"><svg viewBox="0 0 40 40"><path class="w" d="M13 5v30M21 5v30M29 5v30M5 12h31M5 20h31M5 28h31"/></svg></button>
            <button aria-label="Snap"><svg viewBox="0 0 40 40"><path stroke="#dcdcdc" stroke-width="4" stroke-dasharray="4 6" d="M8 10h24M8 20h24M8 30h24"/></svg></button>
            <button aria-label="Ortho"><svg viewBox="0 0 40 40"><path class="g" d="M6 4v31h30M6 25h10v10"/></svg></button>
            <button aria-label="Polar tracking"><svg viewBox="0 0 40 40"><circle class="g" cx="17" cy="21" r="12"/><path class="g" d="M36 21H17L31 6"/></svg></button>
            <button aria-label="Dynamic input"><svg viewBox="0 0 40 40"><path class="g" d="M11 8v14M4 15h14"/><path class="fg" d="M16 24h20v8H16z"/><path class="fk" d="M18 26h2v4h-2z"/></svg></button>
            <button aria-label="Lineweight"><svg viewBox="0 0 40 40"><path class="g" d="M4 8h32M4 17h32M4 26h32"/><path class="fg" d="M4 7h16v4H4zM4 16h16v6H4zM4 25h16v8H4z"/></svg></button>
            <button class="on" aria-label="Transparency"><svg viewBox="0 0 40 40"><path class="w" d="M7 7h27v26H7z"/><path fill="url(#checker)" d="M11 11h19v18H11z"/></svg></button>
            <button class="on" aria-label="Selection cycling"><svg viewBox="0 0 40 40"><path class="w" d="M12 5H7v29h5M22 5h5v10M13 9h8v7h-8z"/><circle class="w" cx="17" cy="23" r="4"/><path class="fw" d="M25 16l11 14h-5l2 5-3 1-2-5-3 3z"/></svg></button>
            <button class="on" aria-label="Object snap tracking"><svg viewBox="0 0 40 40"><path class="w" d="M27 8L6 31h30"/><path class="fw" d="M13 15h7v7h-7z"/></svg></button>
            <button class="on" aria-label="Object snap"><svg viewBox="0 0 40 40"><path class="w" d="M15 9h21v26H9V16M6 5h7v8H6z"/></svg></button>
            <button class="on" aria-label="Annotation visibility"><svg viewBox="0 0 40 40"><use href="#annot"/><circle class="fw" cx="30" cy="12" r="6"/></svg></button>
            <button aria-label="Auto scale"><svg viewBox="0 0 40 40"><use href="#annot"/><use href="#bolt" x="21" y="5" width="13" height="16"/></svg></button>
            <button aria-label="Annotation scale"><svg viewBox="0 0 40 40"><use href="#annot"/></svg></button>
            <label class="scale"><select aria-label="Scale"><option>1:1</option></select><span class="arrow"></span></label>
            <button aria-label="Isolate objects"><svg viewBox="0 0 40 40"><path class="g" d="M5 6h11v10H5zM17 24l8 11H10z"/><circle class="g" cx="29" cy="17" r="6"/></svg></button>
            <button aria-label="Customize"><svg viewBox="0 0 40 40"><use href="#gear" x="5" y="5" width="30" height="30"/></svg></button>
          </div>
        </footer>
      </div>
    </div>
  </div>
</body>
</html>
```
FILE: styles.css
```css
* {
  box-sizing: border-box;
}

body {
  margin: 0;
  background-color: #212830;
  color: #b6babf;
  font-family: "Noto Sans", sans-serif;
  font-size: 20px;
}

button, select, input {
  margin: 0;
  padding: 0;
  border: none;
  border-radius: 0;
  background: none;
  color: inherit;
  font: inherit;
}

button {
  display: flex;
  align-items: center;
  justify-content: center;
}

select {
  appearance: none;
}

svg {
  display: block;
  overflow: visible;
}

.defs {
  position: absolute;
  width: 0;
  height: 0;
}

symbol {
  overflow: visible;
}

/* icon paints */
.g, .b, .w, .d, .t, .gn {
  fill: none;
  stroke-width: 2px;
}
.g { stroke: #dcdcdc; }
.b { stroke: #82c3ff; }
.w { stroke: #fff; }
.d { stroke: #777; }
.t { stroke: #d3a874; }
.gn { stroke: #82d18c; }
.fg { fill: #dadada; }
.fb { fill: #82c3ff; }
.fbl { fill: #98caf7; }
.fw { fill: #fff; }
.fl { fill: #f4f4f4; }
.fk { fill: #3c4452; }
.fo { fill: #ffd580; }
.fr { fill: #ee6b67; }
.ft { fill: #d3a874; }
.fgn { fill: #8fd39b; }
.dash { stroke-dasharray: 3 2; }
.scallop { stroke-dasharray: 2 4; }
.edge { stroke: #3b4453; stroke-width: 2px; }
.halo { stroke: #3d4350; stroke-width: 3px; paint-order: stroke; }
.block { fill: #6f7380; stroke: #dcdcdc; stroke-width: 2px; }
.badge { fill: #e97742; stroke: #fff; stroke-width: 2px; }

.letter {
  font-family: Roboto, sans-serif;
  font-weight: 500;
  text-anchor: middle;
}

.letter.light {
  font-weight: 400;
}

.app {
  display: flex;
  flex-direction: column;
  height: 100vh;
  overflow: hidden;
}

/* top toolbar */
.toolbar {
  position: relative;
  display: flex;
  flex: none;
  align-items: center;
  justify-content: center;
  gap: 130px;
  height: 70px;
  margin-bottom: 2px;
  padding: 2px 10px 0 0;
  background-color: #3b4453;
}

.notch {
  position: absolute;
  top: 0;
  left: 1328px;
  width: 28px;
  height: 4px;
  background-color: #ecb646;
}

.group {
  display: flex;
  gap: 34px;
}

.tool svg {
  width: 32px;
  height: 32px;
}

/* tabs */
.tabs {
  display: flex;
  flex: none;
  gap: 2px;
  height: 44px;
  margin-bottom: 2px;
}

.tabs > * {
  background-color: #3b4453;
}

.tabs .set {
  width: 65px;
  background-color: #30333e;
}

.tabs .set-on {
  height: 46px;
  background-color: #3d4350;
}

.set svg {
  width: 32px;
  height: 32px;
}

.more {
  width: 46px;
}

.more:last-child {
  width: 48px;
}

.more svg {
  width: 14px;
  height: 12px;
  fill: none;
  stroke: #a5a7ab;
  stroke-width: 2px;
}

.square {
  width: 44px;
}

.tabs .square {
  width: 45px;
}

.square svg {
  width: 30px;
  height: 30px;
}

.tab {
  justify-content: flex-start;
  width: 256px;
  padding-left: 7px;
  color: #a4a8af;
  font-family: "Liberation Sans", sans-serif;
  font-size: 22px;
}

.tabs .active, .layout.active {
  background-color: #4f5b70;
  color: #f4f4f4;
  font-weight: bold;
}

.fill {
  flex: 1;
}

.work {
  display: flex;
  flex: 1;
  min-height: 0;
}

/* tool palette */
.sidebar {
  display: flex;
  flex: none;
  flex-direction: column;
  width: 180px;
  background-color: #3d4350;
}

.sections {
  flex: 1;
  min-height: 0;
  overflow: hidden;
  padding: 0 8px;
}

.sections section {
  padding-bottom: 10px;
  border-top: 2px solid #212830;
}

.sections section:first-child {
  margin-top: -4px;
}

.sections h2 {
  display: flex;
  align-items: center;
  gap: 10px;
  height: 40px;
  margin: 0;
  padding-top: 5px;
  color: #f4f4f4;
  font-family: "Liberation Sans", sans-serif;
  font-size: 20px;
  font-weight: normal;
}

.arrow {
  flex: none;
  border: 6px solid transparent;
  border-top: 8px solid #b9b9b5;
  border-bottom: 0;
}

h2 .arrow {
  border-width: 8px 8px 0;
  border-top-color: #f4f4f4;
}

h2 button {
  margin: 0 2px 0 auto;
  color: #f4f4f4;
}

h2 button svg {
  width: 20px;
  height: 20px;
}

.tools {
  display: grid;
  grid-template-columns: repeat(3, 60px);
  grid-auto-rows: 64px;
  margin: 0 -8px;
}

.tools button {
  position: relative;
}

.tools svg {
  width: 32px;
  height: 32px;
}

.fly::after {
  content: "";
  position: absolute;
  right: 8px;
  bottom: 10px;
  border-bottom: 8px solid #9d9fa3;
  border-left: 8px solid transparent;
}

.sidebar footer {
  display: flex;
  flex: none;
  gap: 32px;
  height: 44px;
  padding-left: 28px;
}

.sidebar footer svg {
  width: 28px;
  height: 28px;
}

/* drawing area */
.right {
  display: flex;
  flex: 1;
  flex-direction: column;
  min-width: 0;
}

.stage {
  display: flex;
  flex: 1;
  min-height: 0;
}

.canvas {
  position: relative;
  flex: 1;
  overflow: hidden;
}

.drawing {
  width: 100%;
  height: 100%;
}

.drawing path, .drawing ellipse {
  fill: none;
}

.drawing .pickbox {
  fill: #212830;
}

.minor { stroke: #252c36; stroke-width: 1.5px; }
.major { stroke: #2d3443; stroke-width: 2px; }
.axis-y { stroke: #1f6e22; stroke-width: 2px; }
.axis-x { stroke: #632229; stroke-width: 1.5px; }
.shape { stroke: #e8eaec; stroke-width: 1.3px; }
.strong { stroke: #fff; stroke-width: 2px; }
.pink { stroke: #f4dcd8; stroke-width: 1.5px; }

.ucs {
  fill: #f4f4f4;
  font-family: Lato, sans-serif;
  font-size: 35px;
  font-weight: 300;
  text-anchor: middle;
}

.view-menu {
  position: absolute;
  top: 9px;
  left: 28px;
  display: flex;
  align-items: center;
  height: 30px;
  color: #9b9b99;
  font-size: 23px;
  font-weight: 600;
}

.view-menu button {
  height: 26px;
  padding: 0 11px;
  border-left: 2px solid #8b8b89;
}

.view-menu button:first-child {
  padding: 0 24px 0 2px;
  border: none;
  font-weight: 400;
}

.viewcube {
  position: absolute;
  top: 80px;
  right: 15px;
  display: flex;
  flex-direction: column;
  align-items: center;
  width: 274px;
}

.viewcube > svg {
  width: 280px;
  height: 240px;
}

.compass text {
  fill: #b2b2b2;
  stroke: #2b3036;
  stroke-width: 2px;
  paint-order: stroke;
  font-family: "Liberation Sans", sans-serif;
  font-size: 118px;
  font-weight: bold;
  text-anchor: middle;
}

.face {
  fill: #484d54;
  font-family: Lato, sans-serif;
  font-size: 68px;
  font-weight: 800;
  text-anchor: middle;
}

.face.small {
  font-size: 50px;
  font-style: italic;
}

.face.tiny {
  font-size: 30px;
}

.ucs-pick {
  display: flex;
  align-items: center;
  justify-content: space-between;
  width: 143px;
  height: 23px;
  margin: 22px 28px 0 0;
  padding: 0 9px 0 8px;
  border-radius: 7px;
  background-color: #6a757d;
  color: #1d242e;
  font-family: Inter, sans-serif;
  font-weight: 500;
}

.ucs-pick svg {
  width: 20px;
  height: 12px;
}

/* command line */
.command {
  position: absolute;
  bottom: 2px;
  left: 828px;
  display: grid;
  grid-template-columns: 76px 916px;
  gap: 2px;
}

.history {
  position: relative;
  grid-column: 2;
  height: 94px;
  padding: 6px 8px 0;
  background-color: #3b4453;
  outline: 2px solid #212830;
}

.history p {
  margin: 0;
  line-height: 30px;
}

.thumb {
  position: absolute;
  right: 9px;
  bottom: 2px;
  width: 8px;
  height: 40px;
  border-radius: 4px;
  background-color: #97999c;
}

.prompt, .entry {
  height: 46px;
  background-color: #3b4453;
}

.prompt {
  padding-bottom: 2px;
}

.prompt svg {
  width: 44px;
  height: 20px;
}

.entry {
  display: flex;
  align-items: center;
  padding: 0 8px 2px;
}

.entry input {
  flex: 1;
  font-size: 22px;
  font-style: italic;
}

.entry input::placeholder {
  color: #979ba1;
}

/* side palettes */
.palettes {
  display: flex;
  flex: none;
  flex-direction: column;
  gap: 2px;
  width: 48px;
  padding: 0 1px 2px 3px;
}

.palettes button {
  flex: 1 1 0;
  padding: 6px 0 0 6px;
  background-color: #30333f;
  color: #d6d6d6;
  font-family: Inter, sans-serif;
  font-size: 24px;
  writing-mode: vertical-rl;
  transform: rotate(180deg);
}

/* status bar */
.status {
  display: flex;
  flex: none;
  gap: 2px;
  height: 48px;
  padding: 2px 1px 2px 2px;
}

.status > * {
  background-color: #3b4453;
}

.layout {
  width: 116px;
  padding-right: 4px;
  color: #a4a8af;
  font-size: 21px;
}

.layout.active {
  width: 118px;
  font-weight: 600;
}

.modes {
  display: flex;
  align-items: center;
  gap: 4px;
  padding: 0 11px 0 12px;
}

.modes button, .modes button svg {
  width: 40px;
  height: 40px;
}

.modes button {
  color: #dcdcdc;
}

.modes .on {
  background-color: #688ebd;
  color: #fff;
}

.coords {
  margin-right: 6px;
  font-size: 24px;
}

.scale {
  display: flex;
  align-items: center;
  gap: 6px;
  margin-right: 6px;
  font-size: 23px;
}
```
